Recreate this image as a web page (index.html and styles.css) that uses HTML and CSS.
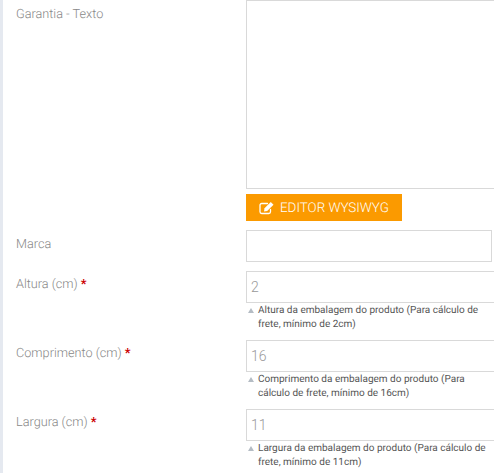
FILE: index.html
```html
<!DOCTYPE html>
<html lang="en">
<head>
    <meta charset="UTF-8">
    <meta name="viewport" content="width=device-width, initial-scale=1.0">
    <title>Produto</title>
    <link rel="stylesheet" href="styles.css">
</head>
<body>

<div class="form">
    <!-- Garantia -->
    <div class="row row-garantia">
        <label class="label">Garantia - Texto</label>
        <div class="field">
            <textarea class="input textarea"></textarea>
            <button class="btn-editor" type="button">
                <svg class="btn-icon" width="16" height="14" viewBox="0 0 16 14" fill="none">
                    <path d="M11.500 8.500v2.300a1.700 1.700 0 0 1-1.700 1.700H2.700A1.700 1.700 0 0 1 1 10.800V4.200a1.700 1.700 0 0 1 1.700-1.700h5.800" stroke="#fff" stroke-width="1.300" stroke-linecap="round"/>
                    <path d="M5.500 7.300 11.800 1l2.700 2.700-6.300 6.300-3.200.500z" fill="#fff"/>
                </svg>
                EDITOR WYSIWYG
            </button>
        </div>
    </div>

    <div class="row row-marca">
        <label class="label">Marca</label>
        <div class="field">
            <input class="input input-short" type="text">
        </div>
    </div>

    <div class="row row-size">
        <label class="label">Altura (cm) <span class="req">*</span></label>
        <div class="field">
            <input class="input" type="text" value="2">
            <p class="help">Altura da embalagem do produto (Para cálculo de frete, mínimo de 2cm)</p>
        </div>
    </div>

    <div class="row row-size">
        <label class="label">Comprimento (cm) <span class="req">*</span></label>
        <div class="field">
            <input class="input" type="text" value="16">
            <p class="help">Comprimento da embalagem do produto (Para cálculo de frete, mínimo de 16cm)</p>
        </div>
    </div>

    <div class="row row-size">
        <label class="label">Largura (cm) <span class="req">*</span></label>
        <div class="field">
            <input class="input" type="text" value="11">
            <p class="help">Largura da embalagem do produto (Para cálculo de frete, mínimo de 11cm)</p>
        </div>
    </div>
</div>

</body>
</html>
```

FILE: styles.css
```css
/* Reset default margin and padding */
body, p {
    margin: 0;
    padding: 0;
}

html, body {
    height: 100%;
    overflow: hidden;
}

body {
    font-family: Roboto, Arial, sans-serif;
    background-color: #fff;
    border-left: 3px solid #e5e9f0;
    text-rendering: geometricPrecision;
}

.form {
    padding-left: 13px;
}

.row {
    display: flex;
}

.row-garantia {
    height: 230px;
}

.row-marca {
    height: 41px;
}

.row-size {
    height: 69px;
}

.label {
    width: 230px;
    flex-shrink: 0;
    font-size: 12.700px;
    font-weight: 300;
    line-height: 16px;
    color: #888;
    padding-top: 6px;
}

.row-garantia .label,
.row-marca .label {
    padding-top: 7px;
}

.req {
    color: #c00;
    font-weight: 700;
}

.field {
    width: 262px;
    flex-shrink: 0;
}

.input {
    display: block;
    box-sizing: border-box;
    width: 262px;
    height: 32px;
    padding: 0 4px;
    border: 1px solid #d9d9d9;
    background: #fff;
    font-family: Roboto, Arial, sans-serif;
    font-size: 14px;
    font-weight: 300;
    color: #999;
    outline: none;
}

.input-short {
    width: 246px;
}

.textarea {
    height: 189px;
    resize: none;
}

.btn-editor {
    display: flex;
    align-items: center;
    box-sizing: border-box;
    width: 156px;
    height: 27px;
    margin-top: 5px;
    padding: 1px 0 0 13px;
    border: none;
    background-color: #fb9a00;
    color: #fff;
    font-family: Roboto, Arial, sans-serif;
    font-size: 13.400px;
    font-weight: 300;
    white-space: nowrap;
    text-rendering: geometricPrecision;
}

.btn-icon {
    margin-right: 5px;
}

.help {
    position: relative;
    width: 232px;
    padding-top: 1px;
    padding-left: 12px;
    font-size: 10px;
    line-height: 14px;
    color: #555;
}

/* small grey triangle in front of the hint */
.help::before {
    content: "";
    position: absolute;
    left: 2px;
    top: 5px;
    border-left: 3px solid transparent;
    border-right: 3px solid transparent;
    border-bottom: 5px solid #b4bcc4;
}
```
